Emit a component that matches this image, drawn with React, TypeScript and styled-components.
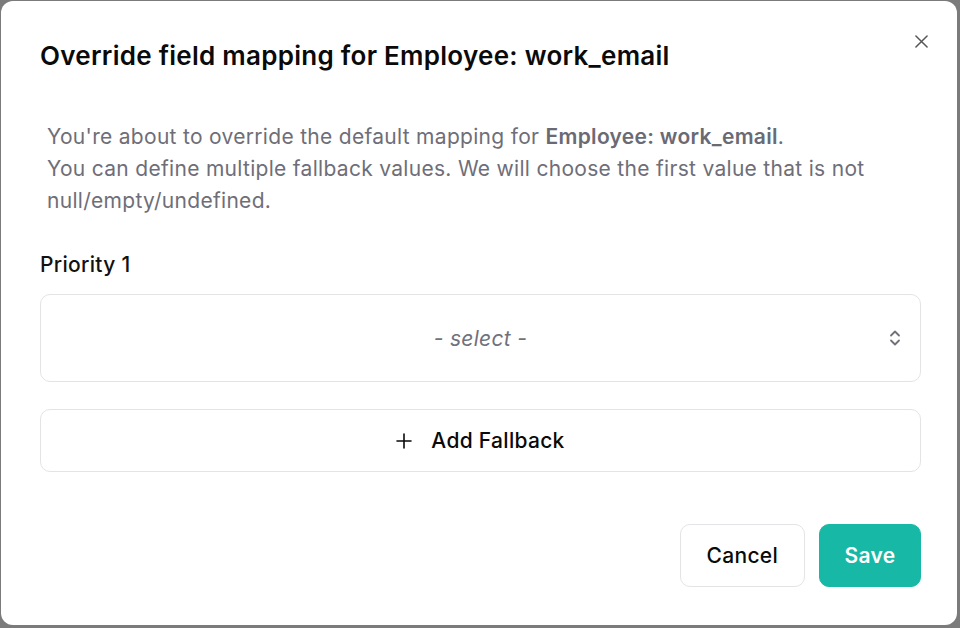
import styled, { createGlobalStyle } from 'styled-components';

const GlobalStyle = createGlobalStyle`
	html, body {
		margin: 0;
		padding: 0;
		background: #7b7b7b;
		font-family: Inter, 'Noto Sans', sans-serif;
	}
`;

const Backdrop = styled.div`
	width: 960px;
	height: 628px;
	box-sizing: border-box;
	padding: 1px 3px 3px 1px;
	background: #7b7b7b;
	display: flex;
`;

const Dialog = styled.div`
	flex: 1;
	background: #fff;
	border-radius: 12px;
	padding: 39px 36px 38px 39px;
	display: flex;
	flex-direction: column;
	box-sizing: border-box;
`;

const Header = styled.div`
	display: flex;
	justify-content: space-between;
	align-items: flex-start;
`;

const Title = styled.h2`
	margin: 0;
	font-size: 26px;
	line-height: 32px;
	font-weight: 600;
	color: #0a0a0a;
	letter-spacing: 0.27px;
`;

const CloseButton = styled.button`
	border: none;
	background: none;
	padding: 0;
	margin: -11px -12px 0 0;
	width: 24px;
	height: 24px;
	display: flex;
	align-items: center;
	justify-content: center;
	color: #555;
	cursor: pointer;
`;

const Description = styled.p`
	margin: 49px 0 0 0;
	padding: 0 7px;
	font-size: 21px;
	line-height: 32px;
	letter-spacing: 0.3px;
	color: #6e6e78;
	b {
		font-weight: 600;
		color: #6a6a74;
	}
`;

const Label = styled.div`
	margin-top: 34px;
	font-size: 21px;
	line-height: 28px;
	letter-spacing: 0.3px;
	font-weight: 500;
	color: #111;
`;

const Select = styled.div`
	margin-top: 15px;
	height: 88px;
	border: 1px solid #e4e4e7;
	border-radius: 10px;
	box-sizing: border-box;
	position: relative;
	display: flex;
	align-items: center;
	justify-content: center;
	font-size: 21px;
	letter-spacing: 0.3px;
	font-style: italic;
	color: #71717a;
`;

const Chevrons = styled.span`
	position: absolute;
	right: 18px;
	top: 50%;
	transform: translateY(-50%);
	display: flex;
	color: #71717a;
`;

const FallbackButton = styled.button`
	margin-top: 27px;
	height: 63px;
	border: 1px solid #e4e4e7;
	border-radius: 10px;
	background: #fff;
	display: flex;
	align-items: center;
	justify-content: center;
	gap: 19px;
	font-family: inherit;
	font-size: 21px;
	letter-spacing: 0.3px;
	font-weight: 500;
	color: #0a0a0a;
	cursor: pointer;
`;

const Footer = styled.div`
	margin-top: auto;
	display: flex;
	justify-content: flex-end;
	gap: 14px;
`;

const Button = styled.button<{ $primary?: boolean }>`
	height: 63px;
	padding: 0 ${(p) => (p.$primary ? '24.5px' : '26px')};
	border-radius: 10px;
	font-family: inherit;
	font-size: 21px;
	letter-spacing: 0.3px;
	cursor: pointer;
	border: 1px solid ${(p) => (p.$primary ? '#17b8a6' : '#e4e4e7')};
	background: ${(p) => (p.$primary ? '#17b8a6' : '#fff')};
	color: ${(p) => (p.$primary ? '#fff' : '#0a0a0a')};
	font-weight: ${(p) => (p.$primary ? 600 : 500)};
`;

export default function App() {
	return (
		<>
			<GlobalStyle />
			<Backdrop>
				<Dialog>
					<Header>
						<Title>Override field mapping for Employee: work_email</Title>
						<CloseButton aria-label='Close'>
							<svg width='13' height='13' viewBox='0 0 14 14'>
								<path
									d='M1 1 L13 13 M13 1 L1 13'
									stroke='currentColor'
									strokeWidth='1.6'
									strokeLinecap='round'
								/>
							</svg>
						</CloseButton>
					</Header>
					<Description>
						You're about to override the default mapping for{' '}
						<b>Employee: work_email</b>.<br />
						You can define multiple fallback values. We will choose the first
						value that is not null/empty/undefined.
					</Description>
					<Label>Priority 1</Label>
					<Select>
						- select -
						<Chevrons>
							<svg width='14' height='18' viewBox='0 0 14 18'>
								<path
									d='M3 6.5 L7 2.5 L11 6.5 M3 11.5 L7 15.5 L11 11.5'
									fill='none'
									stroke='currentColor'
									strokeWidth='1.8'
									strokeLinecap='round'
									strokeLinejoin='round'
								/>
							</svg>
						</Chevrons>
					</Select>
					<FallbackButton>
						<svg width='16' height='16' viewBox='0 0 16 16'>
							<path
								d='M8 1 V15 M1 8 H15'
								stroke='currentColor'
								strokeWidth='1.6'
								strokeLinecap='round'
							/>
						</svg>
						Add Fallback
					</FallbackButton>
					<Footer>
						<Button>Cancel</Button>
						<Button $primary>Save</Button>
					</Footer>
				</Dialog>
			</Backdrop>
		</>
	);
}
